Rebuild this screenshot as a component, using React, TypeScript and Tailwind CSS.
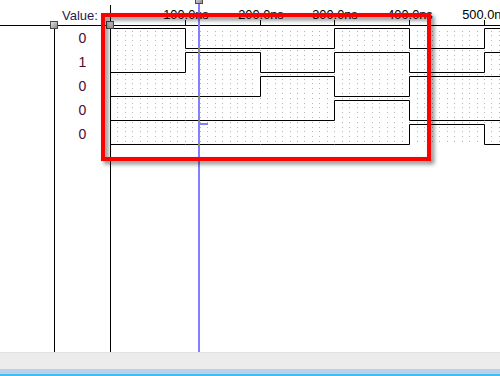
import React from 'react';

const T0 = 110;
const STEP = 74.8; // px per 100ns
const edge = (i: number) => Math.round(T0 + i * STEP);

// levels per 100ns slot, 0..5
const signals = [
  { value: '0', levels: [1, 0, 0, 1, 0, 1] },
  { value: '1', levels: [0, 1, 0, 1, 0, 1] },
  { value: '0', levels: [0, 0, 1, 0, 1, 1] },
  { value: '0', levels: [0, 0, 0, 1, 0, 0] },
  { value: '0', levels: [0, 0, 0, 0, 1, 0] },
];

function wavePath(levels: number[], row: number) {
  const hi = 28 + row * 24 + 0.5;
  const lo = 48 + row * 24 + 0.5;
  let d = `M${T0} ${levels[0] ? hi : lo}`;
  for (let i = 1; i < levels.length; i++) {
    const x = edge(i) + 0.5;
    d += ` H${x}`;
    if (levels[i] !== levels[i - 1]) d += ` V${levels[i] ? hi : lo}`;
  }
  d += ' H500';
  return d;
}

const dots: { x: number; y: number }[] = [];
for (let i = 1; i < 54; i++) {
  const x = Math.round(T0 + i * 7.48);
  for (let j = 0; ; j++) {
    const y = Math.round(30.5 + j * 4.8);
    if (y > 143) break;
    dots.push({ x, y });
  }
}

const marks = [48, 52, 96, 120, 144];

function Handle({ className }: { className: string }) {
  return (
    <div
      className={`absolute w-[8px] h-[8px] border border-[#4a4a4a] bg-gradient-to-br from-[#e2e2e2] to-[#8e8e8e] ${className}`}
    />
  );
}

export default function App() {
  const font = { fontFamily: '"Liberation Sans", Arial, sans-serif' };
  return (
    <div className="relative w-[500px] h-[376px] bg-white overflow-hidden flex flex-col" style={font}>
      {/* header */}
      <div className="flex h-[26px] border-b border-black shrink-0">
        <div className="w-[55px]" />
        <div className="w-[56px] mt-[5px] border-r border-black">
          <div className="pl-[7px] pt-[3px] text-[13px] leading-[15px] text-[#1c1c50]">Value:</div>
        </div>
        <svg width={389} height={25} viewBox="111 0 389 25" className="block">
          {[1, 2, 3, 4, 5].map((i) => (
            <g key={i}>
              <line x1={edge(i) + 0.5} x2={edge(i) + 0.5} y1={20} y2={25} stroke="#000" strokeWidth={1} />
              <text
                x={edge(i) + 1}
                y={19}
                textAnchor="middle"
                fontSize={12.8}
                fill="#000"
                style={font}
              >
                {`${i}00.0ns`}
              </text>
            </g>
          ))}
        </svg>
      </div>

      {/* body */}
      <div className="flex h-[326px] shrink-0">
        <div className="w-[55px] border-r border-black" />
        <div className="w-[56px] border-r border-black flex flex-col">
          {signals.map((s, i) => (
            <div key={i} className="h-[24px] flex items-center justify-center text-[14px] text-[#500a30]">
              {s.value}
            </div>
          ))}
        </div>
        <svg width={389} height={326} viewBox="111 26 389 326" className="block">
          {dots.map((d, i) => (
            <rect key={i} x={d.x} y={d.y} width={1} height={1} fill="#b4b4b4" />
          ))}
          {signals.map((s, i) => (
            <path key={i} d={wavePath(s.levels, i)} fill="none" stroke="#000" strokeWidth={1} />
          ))}
        </svg>
      </div>

      {/* status strip */}
      <div className="h-[17px] bg-[#ececec] border-t border-[#e2e2e2] shrink-0" />
      <div className="h-[5px] bg-[#b9d1ea] shrink-0" />
      <div className="flex-1 bg-[#3cbfee]" />

      {/* cursor */}
      <div className="absolute left-[198px] top-0 w-[2px] h-[352px] bg-[#8080ff]" />
      <div className="absolute left-[200px] top-[123px] w-[8px] h-[2px] bg-[#8080ff]" />
      {marks.map((y) => (
        <div key={y} className="absolute left-[198px] w-[2px] h-[1px] bg-[#8a8a30]" style={{ top: y }} />
      ))}

      <Handle className="left-[50px] top-[21px]" />
      <Handle className="left-[106px] top-[21px]" />
      <Handle className="left-[195px] top-[-4px]" />

      {/* annotation */}
      <div className="absolute left-[101px] top-[13px] w-[330px] h-[148px] border-4 border-[#ff0000] drop-shadow-[3px_3px_2px_rgba(0,0,0,0.5)]" />
    </div>
  );
}
